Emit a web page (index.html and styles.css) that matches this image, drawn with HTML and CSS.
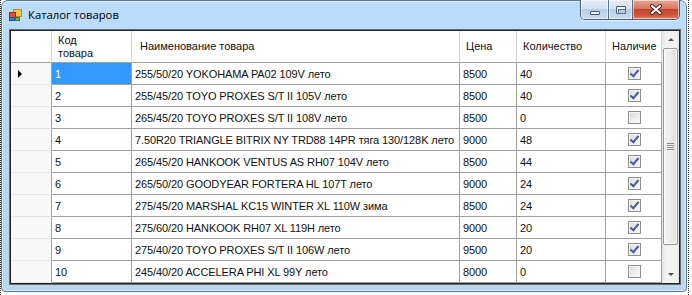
FILE: index.html
```html
<!DOCTYPE html>
<html lang="ru">
<head>
    <meta charset="UTF-8">
    <title>Каталог товаров</title>
    <link rel="stylesheet" href="styles.css">
</head>
<body>

<div class="shot">
    <div class="window">

        <!-- Title bar -->
        <div class="titlebar">
            <svg class="app-icon" width="13" height="12" viewBox="0 0 13 12">
                <rect x="4.5" y="0.5" width="8" height="7" fill="#f4c542" stroke="#b98a1c"/>
                <rect x="0.5" y="3.5" width="6" height="5" fill="#e0503c" stroke="#9c2a1c"/>
                <rect x="0.5" y="8.5" width="5" height="3" fill="#3f7fd0" stroke="#234f8f"/>
                <rect x="6.5" y="8.5" width="4" height="3" fill="#6cb54a" stroke="#3c7a27"/>
            </svg>
            <span class="title">Каталог товаров</span>
            <div class="caption-buttons">
                <div class="cbtn cbtn-min"><span class="glyph-min"></span></div>
                <div class="cbtn cbtn-max"><span class="glyph-max"></span></div>
                <div class="cbtn cbtn-close">
                    <svg width="14" height="11" viewBox="0 0 14 11">
                        <path d="M3 2 L11 9 M11 2 L3 9" stroke="#4a2a24" stroke-width="4" stroke-linecap="round"/>
                        <path d="M3 2 L11 9 M11 2 L3 9" stroke="#fff" stroke-width="2" stroke-linecap="round"/>
                    </svg>
                </div>
            </div>
        </div>

        <!-- DataGridView -->
        <div class="grid">
            <div class="grid-frame">
                <div class="grid-table">
                    <div class="row head">
                        <div class="rh"></div>
                        <div class="hc">Код<br>товара</div>
                        <div class="hc">Наименование товара</div>
                        <div class="hc">Цена</div>
                        <div class="hc">Количество</div>
                        <div class="hc">Наличие</div>
                    </div>

                    <div class="row">
                        <div class="rh current"><span class="arrow"></span></div>
                        <div class="c sel">1</div>
                        <div class="c">255/50/20 YOKOHAMA PA02 109V лето</div>
                        <div class="c">8500</div>
                        <div class="c">40</div>
                        <div class="c chk"><span class="box on"></span></div>
                    </div>
                    <div class="row">
                        <div class="rh"></div>
                        <div class="c">2</div>
                        <div class="c">255/45/20 TOYO PROXES S/T II 105V лето</div>
                        <div class="c">8500</div>
                        <div class="c">40</div>
                        <div class="c chk"><span class="box on"></span></div>
                    </div>
                    <div class="row">
                        <div class="rh"></div>
                        <div class="c">3</div>
                        <div class="c">265/45/20 TOYO PROXES S/T II 108V лето</div>
                        <div class="c">8500</div>
                        <div class="c">0</div>
                        <div class="c chk"><span class="box"></span></div>
                    </div>
                    <div class="row">
                        <div class="rh"></div>
                        <div class="c">4</div>
                        <div class="c">7.50R20 TRIANGLE BITRIX NY TRD88 14PR тяга 130/128K лето</div>
                        <div class="c">9000</div>
                        <div class="c">48</div>
                        <div class="c chk"><span class="box on"></span></div>
                    </div>
                    <div class="row">
                        <div class="rh"></div>
                        <div class="c">5</div>
                        <div class="c">265/45/20 HANKOOK VENTUS AS RH07 104V лето</div>
                        <div class="c">8500</div>
                        <div class="c">44</div>
                        <div class="c chk"><span class="box on"></span></div>
                    </div>
                    <div class="row">
                        <div class="rh"></div>
                        <div class="c">6</div>
                        <div class="c">265/50/20 GOODYEAR FORTERA HL 107T лето</div>
                        <div class="c">9000</div>
                        <div class="c">24</div>
                        <div class="c chk"><span class="box on"></span></div>
                    </div>
                    <div class="row">
                        <div class="rh"></div>
                        <div class="c">7</div>
                        <div class="c">275/45/20 MARSHAL KC15 WINTER XL 110W зима</div>
                        <div class="c">8500</div>
                        <div class="c">24</div>
                        <div class="c chk"><span class="box on"></span></div>
                    </div>
                    <div class="row">
                        <div class="rh"></div>
                        <div class="c">8</div>
                        <div class="c">275/60/20 HANKOOK RH07 XL 119H лето</div>
                        <div class="c">9000</div>
                        <div class="c">20</div>
                        <div class="c chk"><span class="box on"></span></div>
                    </div>
                    <div class="row">
                        <div class="rh"></div>
                        <div class="c">9</div>
                        <div class="c">275/40/20 TOYO PROXES S/T II 106W лето</div>
                        <div class="c">9500</div>
                        <div class="c">20</div>
                        <div class="c chk"><span class="box on"></span></div>
                    </div>
                    <div class="row">
                        <div class="rh"></div>
                        <div class="c">10</div>
                        <div class="c">245/40/20 ACCELERA PHI XL 99Y лето</div>
                        <div class="c">8000</div>
                        <div class="c">0</div>
                        <div class="c chk"><span class="box"></span></div>
                    </div>
                </div>

                <!-- Vertical scrollbar -->
                <div class="vscroll">
                    <div class="sb-btn"><span class="tri-up"></span></div>
                    <div class="sb-thumb"><span class="grip"></span></div>
                    <div class="sb-track"></div>
                    <div class="sb-btn"><span class="tri-down"></span></div>
                </div>
            </div>
        </div>

    </div>
</div>

</body>
</html>
```

FILE: styles.css
```css
* {
    box-sizing: border-box;
}

html, body {
    margin: 0;
    padding: 0;
    background: #fff;
}

body {
    width: 692px;
    height: 295px;
    overflow: hidden;
    font-family: "Liberation Sans", Arial, sans-serif;
    font-size: 11px;
    color: #000;
}

/* screenshot selection marquee */
.shot {
    width: 689px;
    height: 295px;
    border-left: 1px dotted #3a3a3a;
    border-right: 1px dotted #3a3a3a;
}

/*--------------------
Window frame
--------------------*/
.window {
    width: 686px;
    height: 292px;
    border: 1px solid #5b7899;
    border-radius: 7px 7px 4px 4px;
    background: linear-gradient(180deg, #bcdcfb 0%, #b5d8fb 40%, #b9d7f4 100%);
    box-shadow: inset 0 0 0 1px rgba(255, 255, 255, 0.45);
    padding: 0 5px 6px 7px;
    display: flex;
    flex-direction: column;
}

.titlebar {
    height: 28px;
    display: flex;
    align-items: flex-start;
    flex: none;
}

.app-icon {
    margin-top: 8px;
    flex: none;
}

.title {
    margin-left: 6px;
    margin-top: 6px;
    font-family: "Open Sans", "Noto Sans", sans-serif;
    font-size: 11.3px;
    line-height: 16px;
    color: #000;
}

.caption-buttons {
    margin-left: auto;
    margin-right: 1px;
    margin-top: -1px;
    display: flex;
    height: 20px;
    border: 1px solid #4c5f78;
    border-top: none;
    border-radius: 0 0 5px 5px;
    overflow: hidden;
    box-shadow: 0 1px 0 rgba(255, 255, 255, 0.6);
}

.cbtn {
    height: 100%;
    display: flex;
    align-items: center;
    justify-content: center;
    box-shadow: inset 0 0 0 1px rgba(255, 255, 255, 0.55);
}

.cbtn-min {
    width: 28px;
    background: linear-gradient(180deg, #e4edf8 0%, #d3e0f0 45%, #b9cde6 50%, #c9dcf2 100%);
    border-right: 1px solid #56708f;
}

.cbtn-max {
    width: 24px;
    background: linear-gradient(180deg, #e4edf8 0%, #d3e0f0 45%, #b9cde6 50%, #c9dcf2 100%);
    border-right: 1px solid #56708f;
}

.cbtn-close {
    width: 46px;
    background: linear-gradient(180deg, #e9a995 0%, #d9765f 45%, #c2452c 50%, #d35b3f 85%, #e28a66 100%);
}

.glyph-min {
    width: 10px;
    height: 4px;
    margin-top: 6px;
    background: #fff;
    border: 1px solid #435975;
    border-radius: 1px;
}

.glyph-max {
    width: 10px;
    height: 8px;
    border: 1px solid #435975;
    border-radius: 1px;
    background: #fff;
    box-shadow: inset 0 0 0 1px #fff;
    position: relative;
}

.glyph-max::after {
    content: "";
    position: absolute;
    left: 1px;
    top: 2px;
    width: 6px;
    height: 3px;
    background: #b7c9e0;
    border: 1px solid #5b7392;
}

/*--------------------
Grid
--------------------*/
.grid {
    flex: none;
    height: 256px;
    border: 1px solid #6a6a6a;
}

.grid-frame {
    height: 100%;
    border: 1px solid #232323;
    background: #fff;
    display: flex;
}

.grid-table {
    flex: 1 1 auto;
    display: flex;
    flex-direction: column;
}

.row {
    display: grid;
    grid-template-columns: 41px 80px 328px 57px 89px 56px;
    height: 22px;
}

.row.head {
    height: 32px;
}

.rh {
    background: #f9f9f9;
    border-right: 1px solid #a0a0a0;
    border-bottom: 1px solid #e6e6e6;
    display: flex;
    align-items: center;
}

.head .rh {
    background: #fff;
    border-right: 1px solid #d5d5d5;
    border-bottom: 1px solid #a0a0a0;
}

.arrow {
    margin-left: 7px;
    width: 0;
    height: 0;
    border-top: 4px solid transparent;
    border-bottom: 4px solid transparent;
    border-left: 4px solid #000;
}

.hc {
    background: #fff;
    border-right: 1px solid #d5d5d5;
    border-bottom: 1px solid #a0a0a0;
    padding: 0 5px 0 6px;
    display: flex;
    align-items: center;
    line-height: 13px;
    color: #111;
}

.hc:nth-child(3) {
    padding-left: 8px;
}

.c {
    border-right: 1px solid #a0a0a0;
    border-bottom: 1px solid #a0a0a0;
    padding: 0 3px;
    display: flex;
    align-items: center;
    white-space: nowrap;
    overflow: hidden;
    color: #111;
    letter-spacing: -0.1px;
}

.c.sel {
    background: #3399ff;
    color: #fff;
}

.c.chk {
    justify-content: center;
    padding: 0 0 0 1px;
}

/* read-only checkbox */
.box {
    width: 13px;
    height: 13px;
    border: 1px solid #8e8f8f;
    background: linear-gradient(135deg, #d9d9d9 0%, #efefef 60%, #f9f9f9 100%);
    box-shadow: inset 0 0 0 1px #f4f4f4;
    position: relative;
}

.box.on::after {
    content: "";
    position: absolute;
    left: 3px;
    top: 0px;
    width: 3px;
    height: 7px;
    border-right: 2px solid #4a5c9a;
    border-bottom: 2px solid #4a5c9a;
    transform: rotate(40deg);
}

/*--------------------
Scrollbar
--------------------*/
.vscroll {
    width: 17px;
    flex: none;
    display: flex;
    flex-direction: column;
    background: linear-gradient(90deg, #e4e4e4 0%, #f2f2f2 20%, #f2f2f2 80%, #e8e8e8 100%);
}

.sb-btn {
    height: 17px;
    flex: none;
    display: flex;
    align-items: center;
    justify-content: center;
}

.tri-up {
    width: 0;
    height: 0;
    border-left: 3px solid transparent;
    border-right: 3px solid transparent;
    border-bottom: 3px solid #505050;
}

.tri-down {
    width: 0;
    height: 0;
    border-left: 3px solid transparent;
    border-right: 3px solid transparent;
    border-top: 3px solid #505050;
}

.sb-thumb {
    height: 197px;
    flex: none;
    margin: 0 1px;
    border: 1px solid #979797;
    border-radius: 2px;
    background: linear-gradient(90deg, #f5f5f5 0%, #ececec 50%, #dedede 100%);
    box-shadow: inset 0 0 0 1px rgba(255, 255, 255, 0.8);
    display: flex;
    align-items: center;
    justify-content: center;
}

.grip {
    width: 7px;
    height: 7px;
    background: repeating-linear-gradient(180deg, #8a8a8a 0, #8a8a8a 1px, #f2f2f2 1px, #f2f2f2 2px);
}

.sb-track {
    flex: 1 1 auto;
}
```
